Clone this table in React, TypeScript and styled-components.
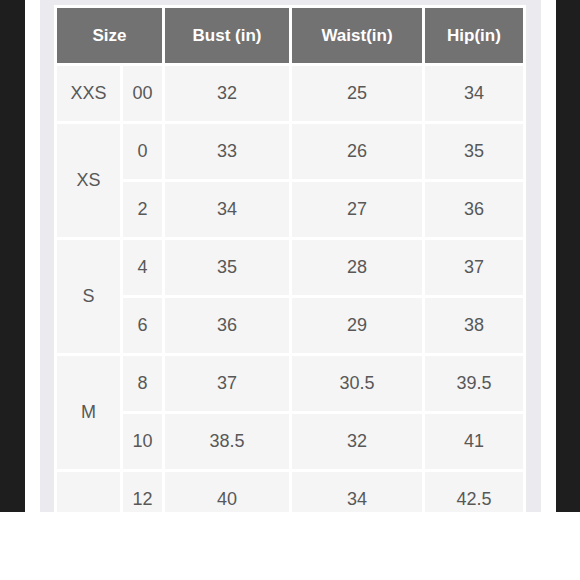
import styled, { createGlobalStyle } from 'styled-components';

type Row = {
  size?: string;
  span?: number;
  num: string;
  bust: string;
  waist: string;
  hip: string;
};

// the screenshot is cut off partway through the 12 row
const rows: Row[] = [
  { size: 'XXS', span: 1, num: '00', bust: '32', waist: '25', hip: '34' },
  { size: 'XS', span: 2, num: '0', bust: '33', waist: '26', hip: '35' },
  { num: '2', bust: '34', waist: '27', hip: '36' },
  { size: 'S', span: 2, num: '4', bust: '35', waist: '28', hip: '37' },
  { num: '6', bust: '36', waist: '29', hip: '38' },
  { size: 'M', span: 2, num: '8', bust: '37', waist: '30.5', hip: '39.5' },
  { num: '10', bust: '38.5', waist: '32', hip: '41' },
  { size: '', span: 1, num: '12', bust: '40', waist: '34', hip: '42.5' },
];

export default function App(): JSX.Element {
  return (
    <>
      <GlobalStyle />
      <Screen>
        <SideBar />
        <Gutter />
        <Panel>
          <Table>
            <colgroup>
              <col style={{ width: 63 }} />
              <col style={{ width: 39 }} />
              <col style={{ width: 124 }} />
              <col style={{ width: 130 }} />
              <col style={{ width: 98 }} />
            </colgroup>
            <thead>
              <tr>
                <Head colSpan={2}>Size</Head>
                <Head>Bust (in)</Head>
                <Head>Waist(in)</Head>
                <Head>Hip(in)</Head>
              </tr>
            </thead>
            <tbody>
              {rows.map((r) => (
                <tr key={r.num}>
                  {r.size !== undefined && <Cell rowSpan={r.span}>{r.size}</Cell>}
                  <Cell>{r.num}</Cell>
                  <Cell>{r.bust}</Cell>
                  <Cell>{r.waist}</Cell>
                  <Cell>{r.hip}</Cell>
                </tr>
              ))}
            </tbody>
          </Table>
        </Panel>
        <Gutter />
        <SideBar />
      </Screen>
    </>
  );
}

const GlobalStyle = createGlobalStyle`
  html, body {
    margin: 0;
    background: #ffffff;
  }
`;

const Screen = styled.div`
  display: grid;
  grid-template-columns: 25px 15px 501px 15px 24px;
  height: 512px;
  overflow: hidden;
  font-family: 'Liberation Sans', Arial, sans-serif;
`;

const SideBar = styled.div`
  background: #1e1e1e;
`;

const Gutter = styled.div`
  background: #ffffff;
`;

const Panel = styled.div`
  background: #ebebef;
  padding: 5px 15px 0 14px;
  overflow: hidden;
`;

const Table = styled.table`
  width: 472px;
  table-layout: fixed;
  border-collapse: separate;
  border-spacing: 3px;
  background: #ffffff;
`;

const Head = styled.th`
  height: 55px;
  padding: 0;
  background: #727272;
  color: #ffffff;
  font-size: 17px;
  font-weight: bold;
  text-align: center;
  vertical-align: middle;
`;

const Cell = styled.td`
  height: 55px;
  padding: 0;
  background: #f5f5f5;
  color: #585858;
  font-size: 18px;
  text-align: center;
  vertical-align: middle;
`;
